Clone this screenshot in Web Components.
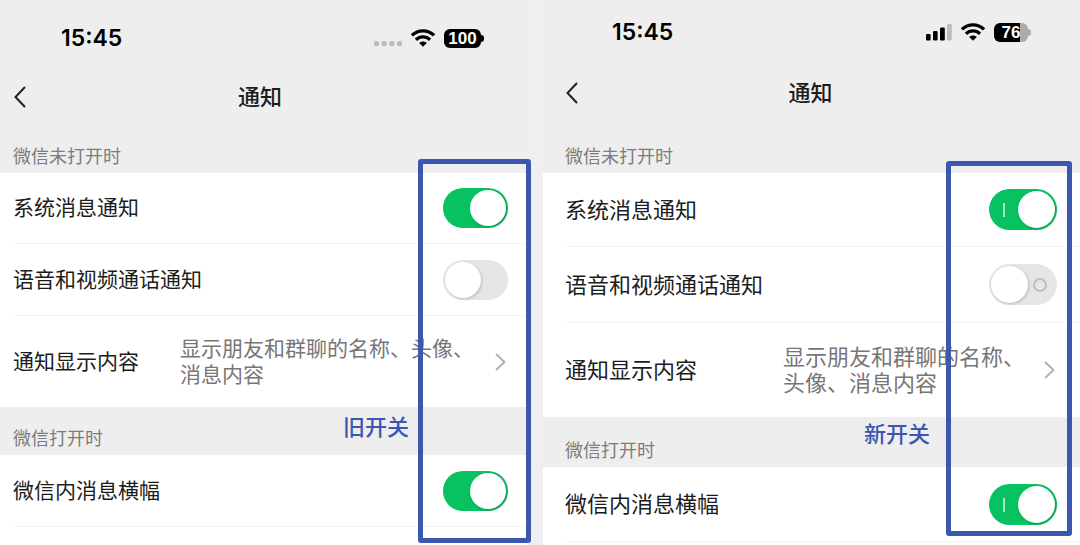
<!DOCTYPE html>
<html lang="zh-CN">
<head>
<meta charset="utf-8">
<meta name="viewport" content="width=device-width, initial-scale=1">
<title>通知</title>
<style>
  body { margin: 0; background: #efeff1; font-family: "Noto Sans CJK SC", sans-serif; color: #1c1c1c; }
</style>
</head>
<body>
<switch-comparison></switch-comparison>

<script>
const define = (name, html, setup) => {
  const template = document.createElement('template');
  template.innerHTML = html;
  customElements.define(name, class extends HTMLElement {
    constructor() {
      super();
      this.attachShadow({ mode: 'open' }).append(template.content.cloneNode(true));
    }
    connectedCallback() {
      if (setup) setup(this, this.shadowRoot);
    }
  });
};

define('wifi-icon', `
  <style>:host { display: block; width: 24px; height: 18px; } svg { display: block; }</style>
  <svg width="24" height="18" viewBox="0 0 24 18" fill="none" stroke="#000" stroke-width="3.3" aria-hidden="true">
    <path d="M1 6.4C7.2.3 16.8.3 23 6.4"/>
    <path d="M4.9 10.7C9 6.8 15 6.8 19.1 10.7"/>
    <path d="M12 17.8L8.2 14C10.4 12 13.6 12 15.8 14Z" fill="#000" stroke="none"/>
  </svg>`);

define('signal-icon', `
  <style>
    :host { display: block; }
    svg { display: none; }
    :host([level="none"]) .none, :host([level="three"]) .three { display: block; }
  </style>
  <svg class="none" width="28" height="18" viewBox="0 0 28 18" fill="#bcbcbc" aria-hidden="true">
    <rect y="12" width="5" height="5" rx="1.5"/><rect x="7.7" y="12" width="5" height="5" rx="1.5"/>
    <rect x="15.4" y="12" width="5" height="5" rx="1.5"/><rect x="23" y="12" width="5" height="5" rx="1.5"/>
  </svg>
  <svg class="three" width="26" height="18" viewBox="0 0 26 18" aria-hidden="true">
    <rect y="11" width="4.6" height="6.4" rx="1.2"/><rect x="7" y="8" width="4.6" height="9.4" rx="1.2"/>
    <rect x="14" y="4.4" width="4.8" height="13" rx="1.2"/><rect x="21" y="1" width="4.8" height="16.4" rx="1.2" fill="#bdbdbd"/>
  </svg>`);

define('battery-badge', `
  <style>
    :host { display: flex; align-items: center; }
    .cell { box-sizing: border-box; width: 37px; height: 19px; border-radius: 6px; background: #000;
      color: #fff; font: 700 17px/19px "Liberation Sans", sans-serif; text-align: center; }
    .tip { width: 3px; height: 7px; border-radius: 0 3px 3px 0; background: #000; }
    :host([partial]) .cell { width: 34px; background: linear-gradient(90deg, #000 76%, #ababab 76%); }
    :host([partial]) .tip { background: #ababab; }
  </style>
  <div class="cell"><slot></slot></div><div class="tip"></div>`);

define('switch-row', `
  <style>
    :host { display: block; height: var(--h); background: #fff; }
    div { box-sizing: border-box; height: 100%; display: flex; align-items: center; justify-content: space-between;
      margin-left: var(--inset); padding-right: var(--end); border-bottom: 1px solid #f2f2f2; }
    label { flex: 1; padding-bottom: 4px; font-size: var(--text); line-height: 26px; }
    input { appearance: none; display: block; box-sizing: border-box; position: relative; margin: 0;
      width: var(--switch-width); height: var(--switch-height); border-radius: 21px;
      background: #e6e6e9; cursor: pointer; }
    input:checked { background: #08c160; }
    input::before { content: ""; position: absolute; box-sizing: border-box; top: 2px; bottom: 2px; left: 2px;
      aspect-ratio: 1; border-radius: 50%; background: #fff; box-shadow: 1px 1px 3px #0003; }
    input:checked::before { left: auto; right: 2px; }
    :host([marked]) input::after { content: ""; position: absolute; box-sizing: border-box;
      width: 14px; height: 14px; right: 10px; top: 14px; border: 2px solid #bdbdc0; border-radius: 50%; }
    :host([marked]) input:checked::after { width: 2px; right: auto; left: 14px;
      border: 0; border-radius: 0; background: #a5ebc6; }
  </style>
  <div><label for="toggle"></label><input id="toggle" type="checkbox" role="switch"></div>`, (host, root) => {
    root.querySelector('label').textContent = host.getAttribute('label');
    root.querySelector('input').checked = host.hasAttribute('on');
  });

define('detail-row', `
  <style>
    :host { display: block; height: var(--h); background: #fff; }
    button { width: 100%; height: 100%; display: flex; align-items: center; margin: 0; border: 0; background: none;
      padding: 0 var(--end) 0 var(--inset); color: inherit; text-align: left; font: 400 var(--text)/26px "Noto Sans CJK SC", sans-serif; }
    .label { flex: 1; padding-bottom: 4px; white-space: nowrap; }
    .detail { width: var(--detail-width); padding-bottom: 4px; color: #767676; }
    svg { flex: none; }
  </style>
  <button type="button">
    <span class="label"></span>
    <span class="detail"><slot></slot></span>
    <svg width="14" height="20" viewBox="0 0 14 20" fill="none" stroke="#b0b0b0" stroke-width="2" aria-hidden="true"><path d="M2 2L10.5 10L2 18"/></svg>
  </button>`, (host, root) => {
    root.querySelector('.label').textContent = host.getAttribute('label');
  });

define('section-heading', `
  <style>
    :host { display: flex; align-items: flex-end; box-sizing: border-box; height: var(--h); padding: 0 0 6px var(--inset); background: #eee; }
    h2 { margin: 0; font-size: 18px; font-weight: 400; line-height: 24px; color: #7c7c7c; }
  </style>
  <h2><slot></slot></h2>`);

define('phone-screen', `
  <style>
    :host { position: relative; display: flex; flex-direction: column; min-height: 100vh; background: #fff; }
    .status, nav { display: flex; align-items: center; background: #eee; }
    .status { height: var(--status-height); justify-content: space-between; box-sizing: border-box;
      padding: 0 var(--status-end) 0 var(--status-start); color: #000; }
    time { font: 600 23px/28px Inter, sans-serif; }
    .icons { display: flex; align-items: center; gap: 9px; }
    nav { height: var(--nav-height); padding: 0 var(--nav-end) 0 var(--inset); }
    h1 { flex: 1; margin: 0; padding-bottom: 4px; font-size: 22px; font-weight: 500; line-height: 28px; text-align: center; }
    button { width: 16px; height: 28px; padding: 0; border: 0; background: none; }
    svg { display: block; }
  </style>
  <div class="status"><time></time><div class="icons"><slot name="status"></slot></div></div>
  <nav>
    <button type="button" aria-label="返回"><svg width="16" height="28" viewBox="0 0 16 28" fill="none" stroke="#222" stroke-width="2" aria-hidden="true"><path d="M12 4L2.5 14L12 24"/></svg></button>
    <h1>通知</h1>
  </nav>
  <slot></slot>`, (host, root) => {
    root.querySelector('time').textContent = host.getAttribute('time');
  });

define('highlight-frame', `
  <style>
    :host { position: absolute; box-sizing: border-box; border: 5px solid #3c57b0; border-radius: 3px; pointer-events: none; }
    p { position: absolute; right: 100%; margin: 0; width: max-content; color: #3c57b0; font-size: 22px; font-weight: 500; line-height: 28px;
      bottom: var(--note-bottom); padding-right: var(--note-gap); }
  </style>
  <p><slot></slot></p>`);

define('switch-comparison', `
  <style>
    :host { display: grid; grid-template-columns: 529fr 537fr; column-gap: 14px; min-height: 100vh; }
    .old { --text: 21px; --inset: 13px; --end: 21px; --switch-width: 65px; --switch-height: 40px; --detail-width: 314px;
      --status-height: 76px; --status-start: 61px; --status-end: 45px; --nav-height: 42px; --nav-end: 38px; }
    .new { --text: 22px; --inset: 22px; --end: 23px; --switch-width: 68px; --switch-height: 41px; --detail-width: 260px;
      --status-height: 64px; --status-start: 69px; --status-end: 49px; --nav-height: 58px; --nav-end: 40px; }
    .old highlight-frame { right: -2px; top: 159px; width: 113px; height: 384px; --note-bottom: 99px; --note-gap: 14px; }
    .new highlight-frame { right: 8px; top: 161px; width: 126px; height: 375px; --note-bottom: 85px; --note-gap: 21px; }
    .old .head { --h: 55px; } .old .r1 { --h: 71px; } .old .r2 { --h: 72px; } .old .r3 { --h: 91px; } .old .mid { --h: 48px; } .old .r4 { --h: 72px; }
    .new .head { --h: 51px; } .new .r1 { --h: 74px; } .new .r2 { --h: 76px; } .new .r3 { --h: 94px; } .new .mid { --h: 50px; } .new .r4 { --h: 75px; }
  </style>
  <phone-screen class="old" time="15:45">
    <signal-icon slot="status" level="none"></signal-icon>
    <wifi-icon slot="status"></wifi-icon>
    <battery-badge slot="status">100</battery-badge>
    <section-heading class="head">微信未打开时</section-heading>
    <switch-row class="r1" label="系统消息通知" on></switch-row>
    <switch-row class="r2" label="语音和视频通话通知"></switch-row>
    <detail-row class="r3" label="通知显示内容">显示朋友和群聊的名称、头像、消息内容</detail-row>
    <section-heading class="mid">微信打开时</section-heading>
    <switch-row class="r4" label="微信内消息横幅" on></switch-row>
    <highlight-frame>旧开关</highlight-frame>
  </phone-screen>
  <phone-screen class="new" time="15:45">
    <signal-icon slot="status" level="three"></signal-icon>
    <wifi-icon slot="status"></wifi-icon>
    <battery-badge slot="status" partial>76</battery-badge>
    <section-heading class="head">微信未打开时</section-heading>
    <switch-row class="r1" label="系统消息通知" on marked></switch-row>
    <switch-row class="r2" label="语音和视频通话通知" marked></switch-row>
    <detail-row class="r3" label="通知显示内容">显示朋友和群聊的名称、头像、消息内容</detail-row>
    <section-heading class="mid">微信打开时</section-heading>
    <switch-row class="r4" label="微信内消息横幅" on marked></switch-row>
    <highlight-frame>新开关</highlight-frame>
  </phone-screen>`);
</script>
</body>
</html>
